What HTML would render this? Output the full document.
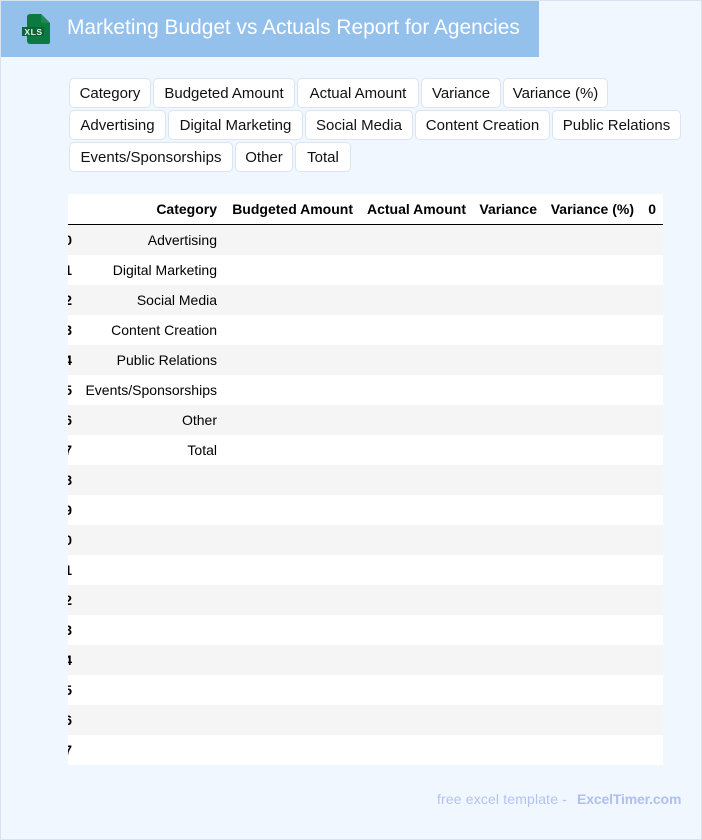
<!DOCTYPE html>
<html><head><meta charset="utf-8"><style>
html,body{margin:0;padding:0}
body{width:702px;height:840px;position:relative;overflow:hidden;background:#f0f7ff;font-family:"Liberation Sans",sans-serif}
#frame{position:absolute;left:0;top:0;width:700px;height:838px;border:1px solid #d8e3f0}
#hd{position:absolute;left:1px;top:1px;width:538px;height:56px;background:#93c1ec}
#title{position:absolute;left:67px;top:14px;color:#fff;font-size:20.9px;line-height:28px;white-space:nowrap}
.c{position:absolute;height:28px;line-height:29px;background:#fff;border:1px solid #dbe5f2;border-radius:5px;font-size:15px;color:#111;text-align:center;white-space:nowrap;box-sizing:content-box}
#tb{position:absolute;left:68px;top:194px;width:595px;height:571px;background:#fff;overflow:hidden}
.r{position:absolute;left:0;width:595px;height:30px}
.g{background:#f5f5f5}
.t{position:absolute;font-size:14px;line-height:30px;color:#000;white-space:nowrap;text-align:right}
.b{font-weight:bold}
#line{position:absolute;left:0;top:30px;width:595px;height:1px;background:#000}
#ft{position:absolute;top:790px;left:437px;font-size:14px;letter-spacing:.15px;line-height:18px;color:#b3c3f1;white-space:nowrap}
#ft2{position:absolute;top:790px;left:577px;font-size:14px;letter-spacing:-.15px;line-height:18px;color:#aebff0;font-weight:bold;white-space:nowrap}
</style></head><body>
<div id="frame"></div>
<div id="hd"></div>
<svg style="position:absolute;left:20px;top:12px" width="34" height="34" viewBox="0 0 34 34">
<path d="M10 2h11l9 9v19a2 2 0 0 1-2 2H10a3 3 0 0 1-3-3V5a3 3 0 0 1 3-3z" fill="#0b7a40"/>
<path d="M21 2l9 9h-7a2 2 0 0 1-2-2z" fill="#1d8a50"/>
<rect x="2" y="15" width="22" height="9" fill="#0d6236"/>
<text x="13.5" y="22.8" font-family="Liberation Sans" font-size="8.5" font-weight="bold" fill="#e8f3ec" text-anchor="middle" letter-spacing=".6">XLS</text>
</svg>
<div id="title">Marketing Budget vs Actuals Report for Agencies</div>

<div class="c" style="left:69px;top:78px;width:80px">Category</div>
<div class="c" style="left:153px;top:78px;width:140px">Budgeted Amount</div>
<div class="c" style="left:297px;top:78px;width:120px">Actual Amount</div>
<div class="c" style="left:421px;top:78px;width:78px">Variance</div>
<div class="c" style="left:503px;top:78px;width:103px">Variance (%)</div>
<div class="c" style="left:69px;top:110px;width:95px">Advertising</div>
<div class="c" style="left:168px;top:110px;width:133px">Digital Marketing</div>
<div class="c" style="left:305px;top:110px;width:106px">Social Media</div>
<div class="c" style="left:415px;top:110px;width:133px">Content Creation</div>
<div class="c" style="left:552px;top:110px;width:127px">Public Relations</div>
<div class="c" style="left:69px;top:142px;width:162px">Events/Sponsorships</div>
<div class="c" style="left:235px;top:142px;width:56px">Other</div>
<div class="c" style="left:295px;top:142px;width:54px">Total</div>

<div id="tb">
<span class="t b" style="right:446px;top:0">Category</span>
<span class="t b" style="right:310px;top:0">Budgeted Amount</span>
<span class="t b" style="right:197px;top:0">Actual Amount</span>
<span class="t b" style="right:126px;top:0">Variance</span>
<span class="t b" style="right:29px;top:0">Variance (%)</span>
<span class="t b" style="right:7px;top:0">0</span>
<div id="line"></div>
<div class="r g" style="top:31px"><span class="t b" style="right:591px">0</span><span class="t" style="right:446px">Advertising</span></div>
<div class="r" style="top:61px"><span class="t b" style="right:591px">1</span><span class="t" style="right:446px">Digital Marketing</span></div>
<div class="r g" style="top:91px"><span class="t b" style="right:591px">2</span><span class="t" style="right:446px">Social Media</span></div>
<div class="r" style="top:121px"><span class="t b" style="right:591px">3</span><span class="t" style="right:446px">Content Creation</span></div>
<div class="r g" style="top:151px"><span class="t b" style="right:591px">4</span><span class="t" style="right:446px">Public Relations</span></div>
<div class="r" style="top:181px"><span class="t b" style="right:591px">5</span><span class="t" style="right:446px">Events/Sponsorships</span></div>
<div class="r g" style="top:211px"><span class="t b" style="right:591px">6</span><span class="t" style="right:446px">Other</span></div>
<div class="r" style="top:241px"><span class="t b" style="right:591px">7</span><span class="t" style="right:446px">Total</span></div>
<div class="r g" style="top:271px"><span class="t b" style="right:591px">8</span></div>
<div class="r" style="top:301px"><span class="t b" style="right:591px">9</span></div>
<div class="r g" style="top:331px"><span class="t b" style="right:591px">10</span></div>
<div class="r" style="top:361px"><span class="t b" style="right:591px">11</span></div>
<div class="r g" style="top:391px"><span class="t b" style="right:591px">12</span></div>
<div class="r" style="top:421px"><span class="t b" style="right:591px">13</span></div>
<div class="r g" style="top:451px"><span class="t b" style="right:591px">14</span></div>
<div class="r" style="top:481px"><span class="t b" style="right:591px">15</span></div>
<div class="r g" style="top:511px"><span class="t b" style="right:591px">16</span></div>
<div class="r" style="top:541px"><span class="t b" style="right:591px">17</span></div>
</div>
<div id="ft">free excel template -</div>
<div id="ft2">ExcelTimer.com</div>
</body></html>
